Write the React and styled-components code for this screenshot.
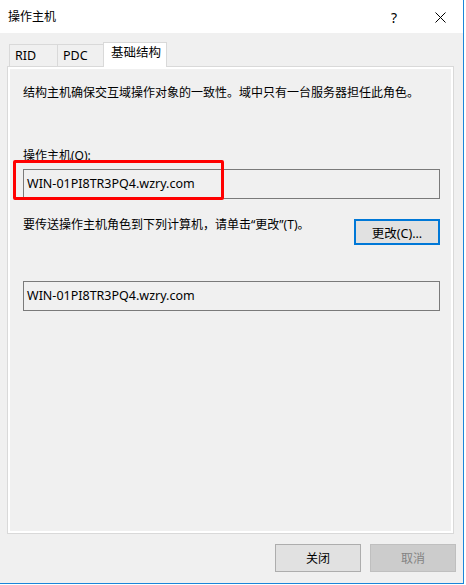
import React from "react"
import styled, { createGlobalStyle } from "styled-components"

const GlobalStyle = createGlobalStyle`
  html, body {
    margin: 0;
    padding: 0;
    background: #fff;
  }
  body {
    font-family: "Noto Sans", "Noto Sans CJK SC", sans-serif;
    font-size: 12px;
    color: #000;
  }
`

const HOST = "WIN-01PI8TR3PQ4.wzry.com"

const App = () => {
  return (
    <>
      <GlobalStyle />
      <Window>
        <TitleBar>
          <Title>操作主机</Title>
          <CaptionButton>?</CaptionButton>
          <CaptionButton>
            <svg width="11" height="11" viewBox="0 0 11 11">
              <path d="M0.5 0.5 L10.5 10.5 M10.5 0.5 L0.5 10.5" stroke="#000" strokeWidth="1" fill="none" />
            </svg>
          </CaptionButton>
        </TitleBar>

        <Client>
          <TabRow>
            <Tab width={49}>RID</Tab>
            <Tab width={48} shift={-1}>PDC</Tab>
            <Tab width={64} shift={-2} active>基础结构</Tab>
          </TabRow>

          <Panel>
            <Text>结构主机确保交互域操作对象的一致性。域中只有一台服务器担任此角色。</Text>

            <Label>操作主机(O):</Label>
            <Field>
              <TextBox>{HOST}</TextBox>
              <Highlight />
            </Field>

            <TransferRow>
              <Text>要传送操作主机角色到下列计算机，请单击“更改”(T)。</Text>
              <ChangeButton>更改(C)...</ChangeButton>
            </TransferRow>

            <TextBox spaced>{HOST}</TextBox>
          </Panel>

          <ButtonBar>
            <DialogButton>关闭</DialogButton>
            <DialogButton disabled>取消</DialogButton>
          </ButtonBar>
        </Client>
      </Window>
    </>
  )
}

// outer window, only right and bottom frame visible in the crop
const Window = styled.div`
  box-sizing: border-box;
  width: 464px;
  height: 584px;
  display: flex;
  flex-direction: column;
  border-right: 1px solid #1a86d9;
  border-bottom: 1px solid #1a86d9;
`

const TitleBar = styled.div`
  display: flex;
  align-items: center;
  height: 33px;
  padding: 1px 0 0 8px;
  box-sizing: border-box;
  background: #fff;
`

const Title = styled.div`
  flex: 1;
  line-height: 16px;
`

const CaptionButton = styled.div`
  width: 46px;
  height: 100%;
  display: flex;
  align-items: center;
  justify-content: center;
  font-size: 14px;
`

const Client = styled.div`
  flex: 1;
  display: flex;
  flex-direction: column;
  padding: 9px 7px 0 7px;
  background: #f0f0f0;
`

const TabRow = styled.div`
  display: flex;
  align-items: flex-end;
  padding-left: 2px;
  position: relative;
  z-index: 1;
`

const Tab = styled.div`
  box-sizing: border-box;
  width: ${props => props.width}px;
  height: ${props => (props.active ? 25 : 22)}px;
  margin-left: ${props => props.shift || 0}px;
  margin-bottom: ${props => (props.active ? -1 : 0)}px;
  padding: 0 0 ${props => (props.active ? 4 : 0)}px ${props => (props.active ? 7 : 5)}px;
  display: flex;
  align-items: center;
  border: 1px solid #d9d9d9;
  border-bottom: none;
  background: ${props => (props.active ? "#fff" : "#f0f0f0")};
  position: relative;
  z-index: ${props => (props.active ? 2 : 1)};
  line-height: 16px;
  font-size: 12.5px;
`

const Panel = styled.div`
  box-sizing: border-box;
  width: 447px;
  height: 468px;
  padding: 18px 13px 0 15px;
  display: flex;
  flex-direction: column;
  border: 1px solid #d9d9d9;
  box-shadow: inset 0 0 0 2px #fff;
  background: #f0f0f0;
`

const Text = styled.div`
  line-height: 16px;
`

const Label = styled.div`
  margin-top: 47px;
  line-height: 16px;
`

const Field = styled.div`
  position: relative;
  margin-top: 5px;
`

const TextBox = styled.div`
  box-sizing: border-box;
  height: 30px;
  margin-top: ${props => (props.spaced ? 36 : 0)}px;
  padding: 0 0 2px 3px;
  display: flex;
  align-items: center;
  border: 1px solid #7a7a7a;
  background: #f0f0f0;
  font-size: 12.5px;
`

// red annotation box drawn over the first host field
const Highlight = styled.div`
  position: absolute;
  left: -10px;
  top: -9px;
  width: 211px;
  height: 40px;
  box-sizing: border-box;
  border: 3px solid #ff0000;
  border-radius: 2px;
`

const TransferRow = styled.div`
  display: flex;
  justify-content: space-between;
  align-items: flex-start;
  margin-top: 18px;
`

const ChangeButton = styled.div`
  box-sizing: border-box;
  width: 86px;
  height: 26px;
  margin-top: 2px;
  display: flex;
  align-items: center;
  justify-content: center;
  border: 2px solid #0078d7;
  background: #e1e1e1;
  font-size: 12.5px;
`

const ButtonBar = styled.div`
  display: flex;
  justify-content: flex-end;
  gap: 9px;
  margin-top: 10px;
`

const DialogButton = styled.div`
  box-sizing: border-box;
  width: 86px;
  height: 28px;
  display: flex;
  align-items: center;
  justify-content: center;
  border: 1px solid ${props => (props.disabled ? "#bfbfbf" : "#adadad")};
  background: ${props => (props.disabled ? "#cccccc" : "#e1e1e1")};
  color: ${props => (props.disabled ? "#838383" : "#000")};
`

export default App
